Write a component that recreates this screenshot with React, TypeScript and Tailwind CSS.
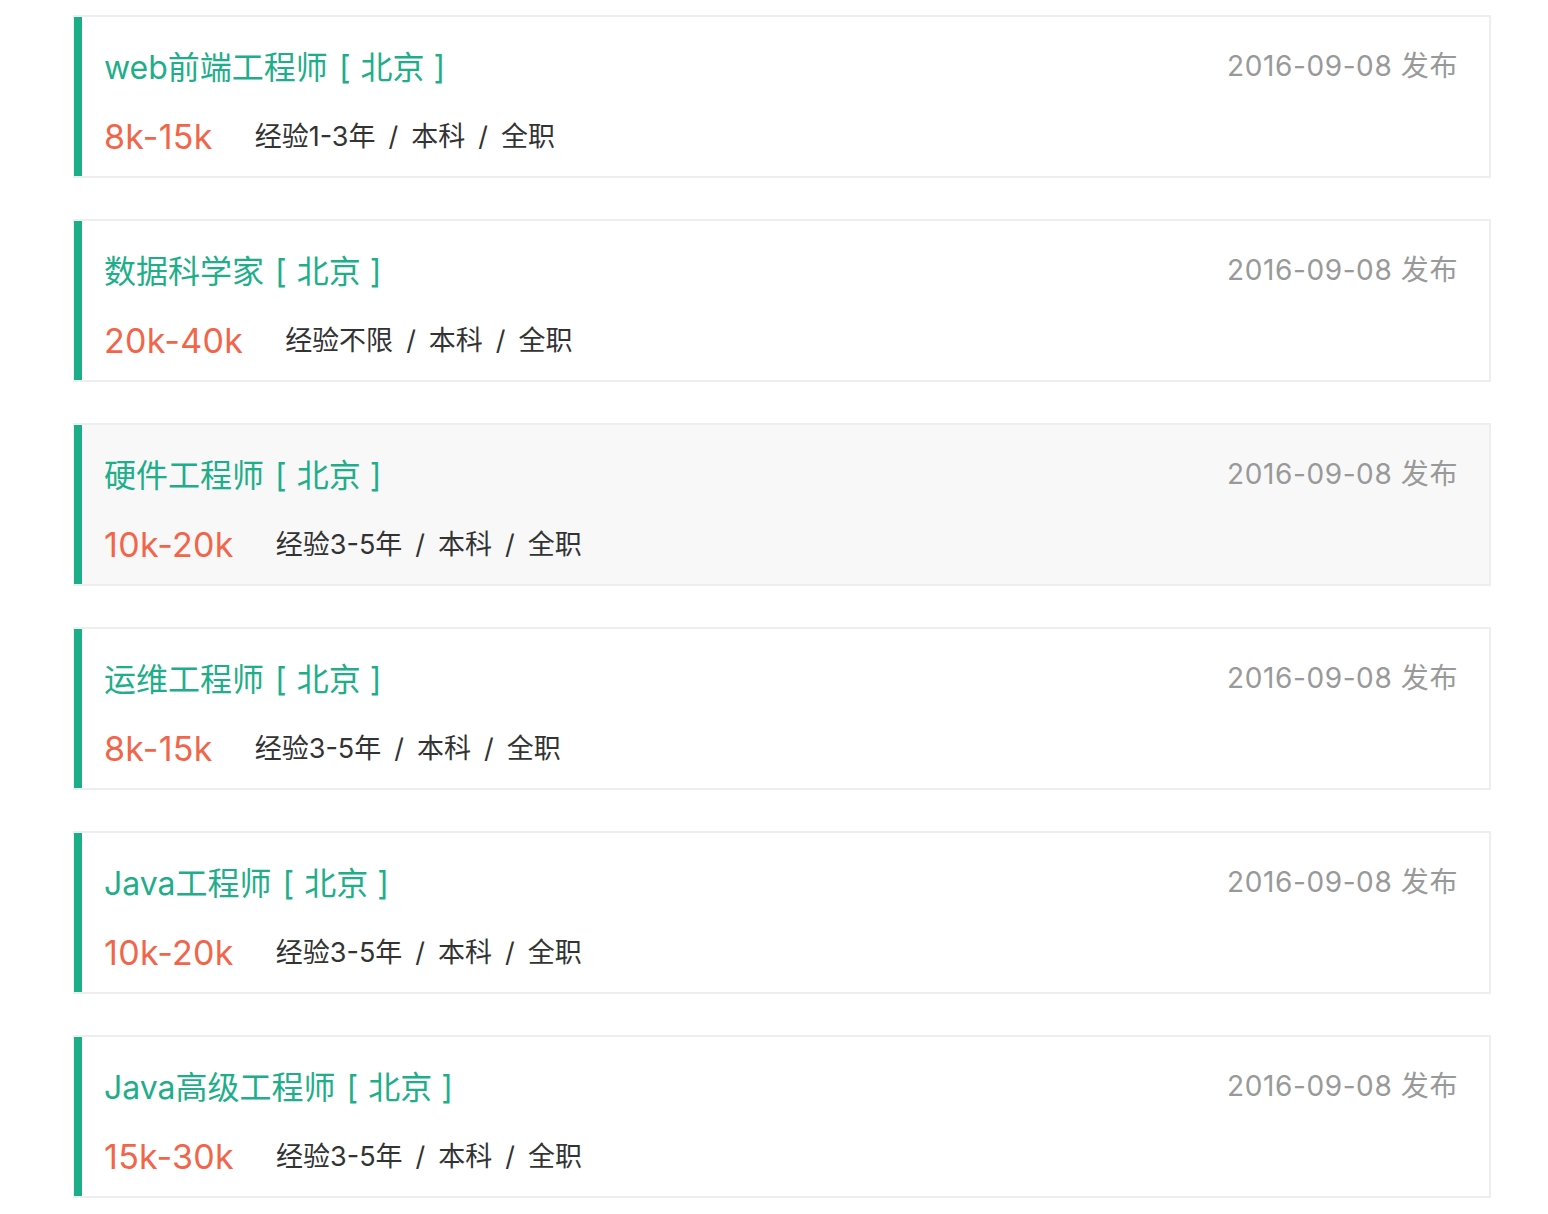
import React from "react";

const jobs = [
  { title: "web前端工程师", salary: "8k-15k", exp: "经验1-3年", hover: false },
  { title: "数据科学家", salary: "20k-40k", exp: "经验不限", hover: false },
  { title: "硬件工程师", salary: "10k-20k", exp: "经验3-5年", hover: true },
  { title: "运维工程师", salary: "8k-15k", exp: "经验3-5年", hover: false },
  { title: "Java工程师", salary: "10k-20k", exp: "经验3-5年", hover: false },
  { title: "Java高级工程师", salary: "15k-30k", exp: "经验3-5年", hover: false },
];

const font = { fontFamily: '"Inter", "Noto Sans CJK SC", sans-serif' };

export default function App() {
  return (
    <div className="bg-white min-h-[1214px] pt-[15px] pl-[73px] w-[1548px]" style={font}>
      <div className="flex flex-col gap-[41px] w-[1418px]">
        {jobs.map((j, i) => (
          <div
            key={i}
            className={`flex h-[163px] border-2 border-[#eeeeee] border-l-[1px] ${j.hover ? "bg-[#f8f8f8]" : "bg-white"}`}
          >
            <div className="w-[8px] bg-[#1bae88] shrink-0" />
            <div className="flex-1 flex justify-between pl-[22px] pr-[31px]">
              <div className="flex flex-col pt-[31px]">
                <div className="flex text-[32px] leading-[40px] text-[#1fae8a] whitespace-pre">
                  <span>{j.title}</span>
                  <span className="ml-[11px] mr-[10px]">[</span>
                  <span>北京</span>
                  <span className="ml-[9px]">]</span>
                </div>
                <div className="flex items-center mt-[29px] leading-[40px]">
                  <span className="text-[34px] tracking-[0.3px] text-[#f1664a] mr-[42px]">{j.salary}</span>
                  <span className="text-[27px] text-[#333333] whitespace-pre flex">
                    <span>{j.exp}</span>
                    <span className="mx-[13px]">/</span>
                    <span>本科</span>
                    <span className="mx-[13px]">/</span>
                    <span>全职</span>
                  </span>
                </div>
              </div>
              <div className="pt-[31px] text-[28px] leading-[36px] tracking-[0.6px] text-[#999999]">
                2016-09-08 发布
              </div>
            </div>
          </div>
        ))}
      </div>
    </div>
  );
}
